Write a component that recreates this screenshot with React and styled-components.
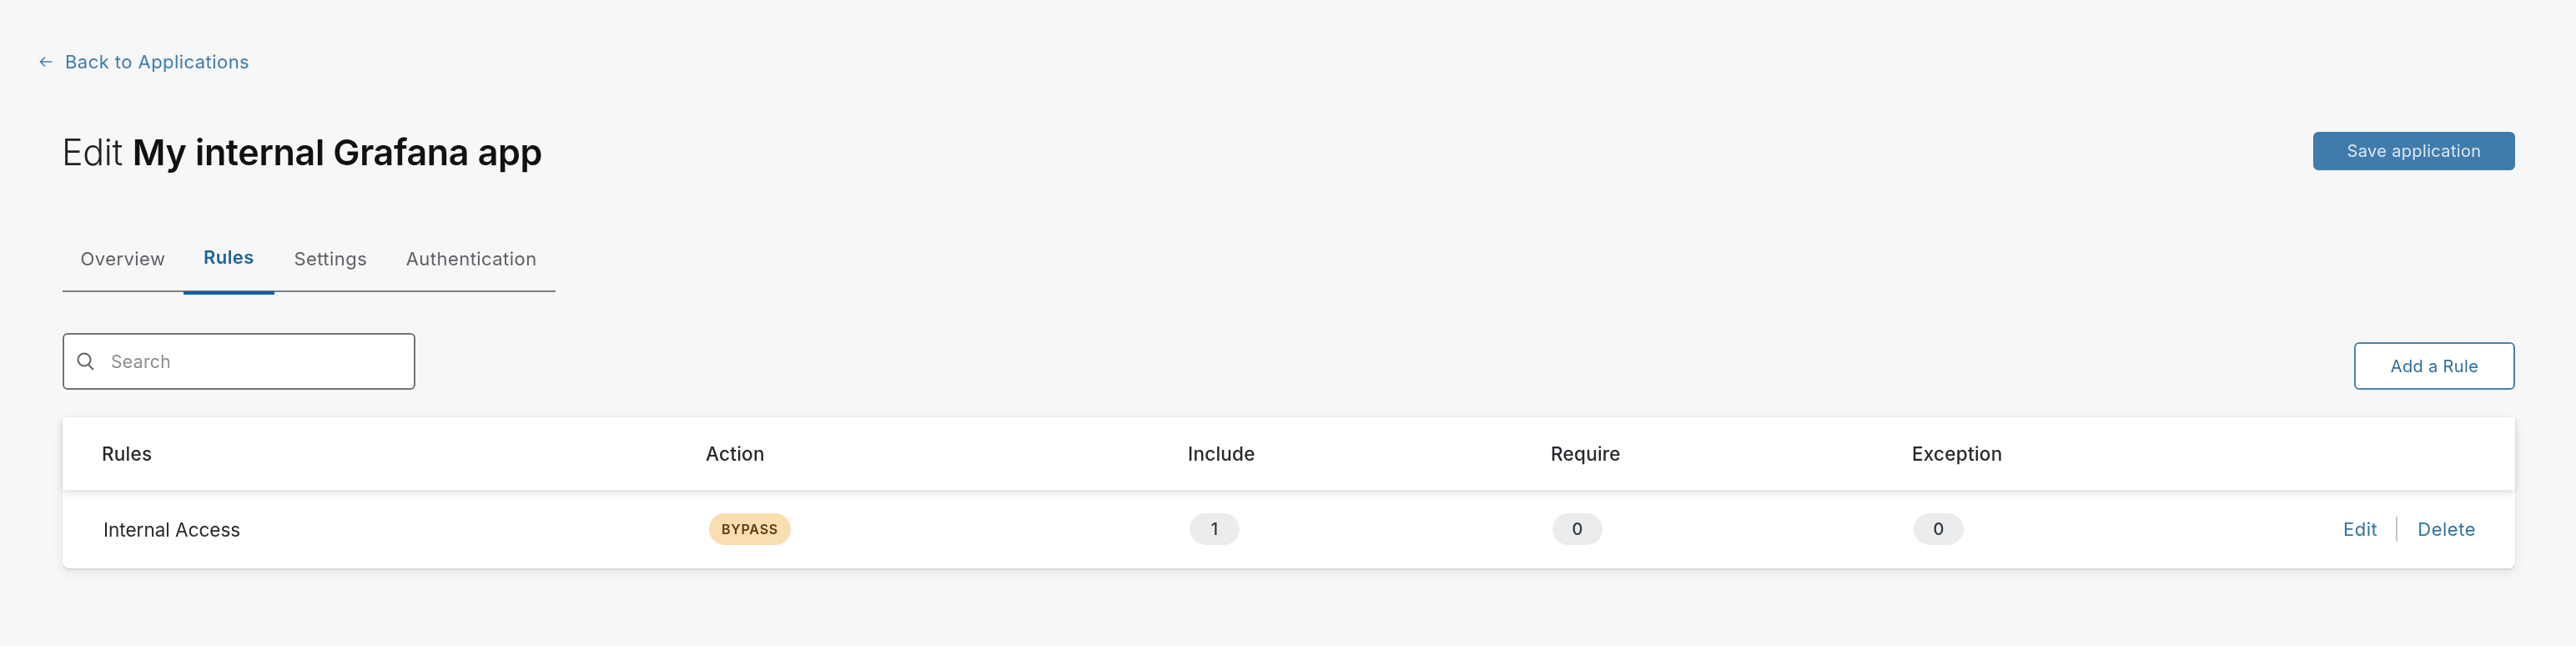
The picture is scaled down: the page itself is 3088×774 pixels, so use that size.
import React from "react";
import styled, { createGlobalStyle } from "styled-components";

const Global = createGlobalStyle`
  html, body { margin: 0; padding: 0; background: #f7f7f7; }
  body { font-family: Inter, "Liberation Sans", sans-serif; color: #1d2125; }
  * { box-sizing: border-box; }
`;

const Page = styled.main`
  width: 3088px;
  height: 774px;
  padding: 61px 73px 0 47px;
  filter: blur(0.5px);
`;

const BackLink = styled.a`
  display: flex;
  align-items: center;
  gap: 15px;
  height: 26px;
  color: #3f7cab;
  font-size: 22px;
  letter-spacing: 0.45px;
`;

const Content = styled.div`
  margin-left: 28px;
`;

const HeaderRow = styled.header`
  display: flex;
  justify-content: space-between;
  align-items: center;
  margin-top: 71px;
  height: 46px;
`;

const Title = styled.h1`
  margin: 2px 0 0 -1px;
  font-size: 43px;
  font-weight: 300;
  letter-spacing: -0.33px;
  color: #202326;
  line-height: 46px;
  strong { font-weight: 600; color: #111; }
`;

const Button = styled.button`
  font-family: inherit;
  font-size: 20px;
  letter-spacing: 0.35px;
  border-radius: 6px;
  border: 2px solid ${(p) => (p.$primary ? "#3f7cad" : "#4a82ad")};
  background: ${(p) => (p.$primary ? "#417bac" : "#fff")};
  color: ${(p) => (p.$primary ? "#dbe7f0" : "#2f6f9f")};
  width: ${(p) => p.$w}px;
  height: ${(p) => p.$h}px;
  padding: 0;
`;

const Tabs = styled.nav`
  display: inline-flex;
  margin-top: 84px;
  width: 591px;
  height: 62px;
  border-bottom: 2px solid #7b7e82;
`;

const Tab = styled.a`
  display: flex;
  align-items: center;
  justify-content: center;
  height: 65px;
  padding: 0 ${(p) => p.$pad}px 22px;
  font-size: 22px;
  letter-spacing: 0.45px;
  color: ${(p) => (p.$active ? "#1e6498" : "#5d6166")};
  font-weight: ${(p) => (p.$active ? 600 : 400)};
  border-bottom: ${(p) => (p.$active ? "4px solid #0f5f9e" : "none")};
`;

const Toolbar = styled.div`
  display: flex;
  justify-content: space-between;
  align-items: flex-end;
  margin-top: 49px;
`;

const SearchBox = styled.label`
  display: flex;
  align-items: center;
  gap: 20px;
  width: 423px;
  height: 68px;
  padding: 0 0 0 15px;
  background: #fff;
  border: 2px solid #70747a;
  border-radius: 6px;
  color: #8a8d91;
  font-size: 21px;
  letter-spacing: 0.4px;
`;

const Table = styled.section`
  margin-top: 33px;
  background: #fff;
  border-radius: 0 0 8px 8px;
  box-shadow: 0 2px 2px rgba(0, 0, 0, 0.1), 0 6px 16px rgba(0, 0, 0, 0.07);
`;

const columns = "724px 578px 435px 433px 1fr auto";

const HeadRow = styled.div`
  display: grid;
  grid-template-columns: ${columns};
  align-items: center;
  height: 87px;
  padding: 0 47px;
  font-size: 22.5px;
  font-weight: 500;
  letter-spacing: 0.25px;
  color: #26292d;
  box-shadow: 0 3px 8px rgba(0, 0, 0, 0.14);
  position: relative;
`;

const BodyRow = styled.div`
  display: grid;
  grid-template-columns: ${columns};
  align-items: center;
  height: 94px;
  padding: 0 47px 0 49px;
  font-size: 22.5px;
  color: #26292d;
`;

const Pill = styled.span`
  display: inline-flex;
  align-items: center;
  justify-content: center;
  justify-self: start;
  height: 38px;
  width: ${(p) => p.$w}px;
  margin-left: ${(p) => p.$ml || 0}px;
  border-radius: 19px;
  font-size: ${(p) => p.$fs}px;
  font-weight: ${(p) => p.$weight || 500};
  letter-spacing: ${(p) => p.$ls || 0}px;
  background: ${(p) => p.$bg};
  color: ${(p) => p.$fg};
`;

const Actions = styled.div`
  display: flex;
  justify-content: flex-end;
  align-items: center;
  font-size: 22px;
  letter-spacing: 0.5px;
  color: #2f73a5;
`;

const Divider = styled.span`
  width: 2px;
  height: 30px;
  margin: 0 24px 0 22px;
  background: #c4c6c8;
`;

const ArrowIcon = () => (
  <svg width="16" height="14" viewBox="0 0 16 14" fill="none" stroke="#3f7cab" strokeWidth="1.6">
    <path d="M15.5 7H1.5M7 1.5 1.5 7 7 12.5" />
  </svg>
);

const SearchIcon = () => (
  <svg width="21" height="22" viewBox="0 0 21 22" fill="none" stroke="#5f6368" strokeWidth="2">
    <circle cx="9" cy="9" r="7.5" />
    <path d="M14 15 20 21" />
  </svg>
);

export default function App() {
  return (
    <>
      <Global />
      <Page>
        <BackLink>
          <ArrowIcon />
          Back to Applications
        </BackLink>
        <Content>
          <HeaderRow>
            <Title>
              Edit <strong>My internal Grafana app</strong>
            </Title>
            <Button $primary $w={242} $h={46}>Save application</Button>
          </HeaderRow>
          <Tabs>
            <Tab $pad={21.5}>Overview</Tab>
            <Tab $active $pad={24}>Rules</Tab>
            <Tab $pad={23.5}>Settings</Tab>
            <Tab $pad={23}>Authentication</Tab>
          </Tabs>
          <Toolbar>
            <SearchBox>
              <SearchIcon />
              Search
            </SearchBox>
            <Button $w={193} $h={57}>Add a Rule</Button>
          </Toolbar>
          <Table>
            <HeadRow>
              <span>Rules</span>
              <span>Action</span>
              <span>Include</span>
              <span>Require</span>
              <span>Exception</span>
            </HeadRow>
            <BodyRow>
              <span>Internal Access</span>
              <Pill $w={98} $ml={2} $fs={16} $weight={600} $ls={0.8} $bg="#f8deb0" $fg="#5b3d12">BYPASS</Pill>
              <Pill $w={60} $fs={20} $bg="#ebeced" $fg="#33373b">1</Pill>
              <Pill $w={60} $fs={20} $bg="#ebeced" $fg="#33373b">0</Pill>
              <Pill $w={60} $fs={20} $bg="#ebeced" $fg="#33373b">0</Pill>
              <Actions>
                <span>Edit</span>
                <Divider />
                <span>Delete</span>
              </Actions>
            </BodyRow>
          </Table>
        </Content>
      </Page>
    </>
  );
}
